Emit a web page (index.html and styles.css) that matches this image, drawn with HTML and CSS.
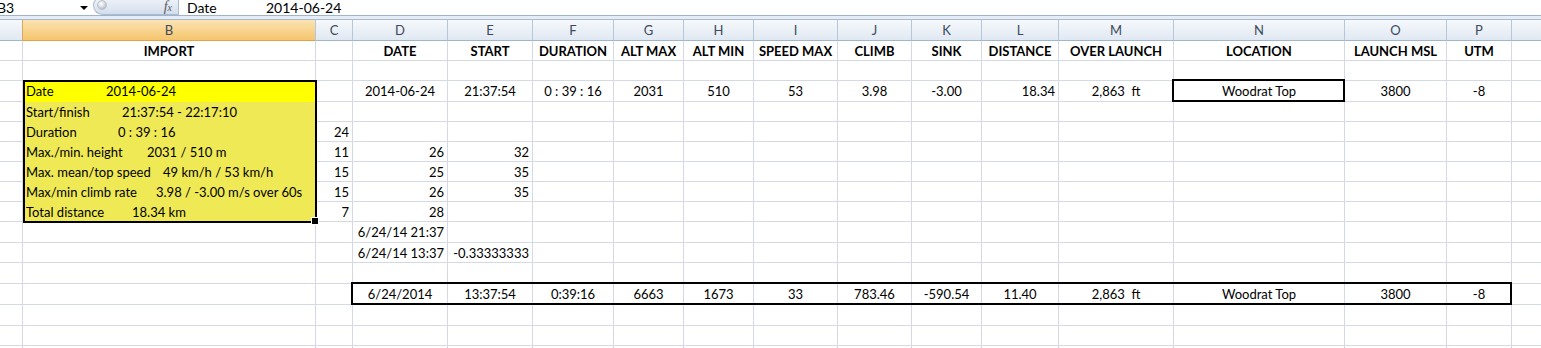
FILE: index.html
```html
<!DOCTYPE html>
<html lang="en">
<head>
<meta charset="utf-8">
<title>Flight log sheet</title>
<link rel="stylesheet" href="styles.css">
</head>
<body>
<div class="fbar">
  <div class="namebox"><span class="nb-text">B3</span><span class="nb-arrow"></span></div>
  <div class="fx-pill"><span class="knob"></span><span class="fx">f<span class="fx-x">x</span></span></div>
  <div class="formula"><span class="f-lbl">Date</span><span>2014-06-24</span></div>
</div>
<div class="strip"></div>
<div class="sheet">
  <div class="row hdr">
    <div class="h"></div><div class="h sel-h">B</div><div class="h">C</div><div class="h">D</div><div class="h">E</div><div class="h">F</div><div class="h">G</div><div class="h">H</div><div class="h">I</div><div class="h">J</div><div class="h">K</div><div class="h">L</div><div class="h">M</div><div class="h">N</div><div class="h">O</div><div class="h">P</div><div class="h"></div>
  </div>
  <div class="row r20 bold">
    <div></div><div class="c">IMPORT</div><div></div><div class="c">DATE</div><div class="c">START</div><div class="c">DURATION</div><div class="c">ALT MAX</div><div class="c">ALT MIN</div><div class="c">SPEED MAX</div><div class="c">CLIMB</div><div class="c">SINK</div><div class="c">DISTANCE</div><div class="c">OVER LAUNCH</div><div class="c">LOCATION</div><div class="c">LAUNCH MSL</div><div class="c">UTM</div><div></div>
  </div>
  <div class="row r20">
    <div></div><div></div><div></div><div></div><div></div><div></div><div></div><div></div><div></div><div></div><div></div><div></div><div></div><div></div><div></div><div></div><div></div>
  </div>
  <div class="row r21">
    <div></div><div class="yb sel sel-top"><span class="lb w1">Date</span>2014-06-24</div><div></div><div class="c">2014-06-24</div><div class="c">21:37:54</div><div class="c">0 : 39 : 16</div><div class="c">2031</div><div class="c">510</div><div class="c">53</div><div class="c">3.98</div><div class="c">-3.00</div><div class="r dist">18.34</div><div class="c">2,863&nbsp; ft</div><div class="c box">Woodrat Top</div><div class="c">3800</div><div class="c">-8</div><div></div>
  </div>
  <div class="row r20">
    <div></div><div class="ys sel"><span class="lb w2">Start/finish</span>21:37:54 - 22:17:10</div><div></div><div></div><div></div><div></div><div></div><div></div><div></div><div></div><div></div><div></div><div></div><div></div><div></div><div></div><div></div>
  </div>
  <div class="row r20">
    <div></div><div class="ys sel"><span class="lb w3">Duration</span>0 : 39 : 16</div><div class="r">24</div><div></div><div></div><div></div><div></div><div></div><div></div><div></div><div></div><div></div><div></div><div></div><div></div><div></div><div></div>
  </div>
  <div class="row r20">
    <div></div><div class="ys sel"><span class="lb w4">Max./min. height</span>2031 / 510 m</div><div class="r">11</div><div class="r">26</div><div class="r">32</div><div></div><div></div><div></div><div></div><div></div><div></div><div></div><div></div><div></div><div></div><div></div><div></div>
  </div>
  <div class="row r20">
    <div></div><div class="ys sel"><span class="lb w5">Max. mean/top speed</span>49 km/h / 53 km/h</div><div class="r">15</div><div class="r">25</div><div class="r">35</div><div></div><div></div><div></div><div></div><div></div><div></div><div></div><div></div><div></div><div></div><div></div><div></div>
  </div>
  <div class="row r20">
    <div></div><div class="ys sel"><span class="lb w6">Max/min climb rate</span>3.98 / -3.00 m/s over 60s</div><div class="r">15</div><div class="r">26</div><div class="r">35</div><div></div><div></div><div></div><div></div><div></div><div></div><div></div><div></div><div></div><div></div><div></div><div></div>
  </div>
  <div class="row r20">
    <div></div><div class="ys sel sel-bot"><span class="lb w7">Total distance</span>18.34 km</div><div class="r">7</div><div class="r">28</div><div></div><div></div><div></div><div></div><div></div><div></div><div></div><div></div><div></div><div></div><div></div><div></div><div></div>
  </div>
  <div class="row r21">
    <div></div><div></div><div></div><div class="r">6/24/14 21:37</div><div></div><div></div><div></div><div></div><div></div><div></div><div></div><div></div><div></div><div></div><div></div><div></div><div></div>
  </div>
  <div class="row r20">
    <div></div><div></div><div></div><div class="r">6/24/14 13:37</div><div class="r frac">-0.33333333</div><div></div><div></div><div></div><div></div><div></div><div></div><div></div><div></div><div></div><div></div><div></div><div></div>
  </div>
  <div class="row r21">
    <div></div><div></div><div></div><div></div><div></div><div></div><div></div><div></div><div></div><div></div><div></div><div></div><div></div><div></div><div></div><div></div><div></div>
  </div>
  <div class="row r21">
    <div></div><div></div><div></div><div class="c fr fr-l">6/24/2014</div><div class="c fr">13:37:54</div><div class="c fr">0:39:16</div><div class="c fr">6663</div><div class="c fr">1673</div><div class="c fr">33</div><div class="c fr">783.46</div><div class="c fr">-590.54</div><div class="c fr">11.40</div><div class="c fr">2,863&nbsp; ft</div><div class="c fr">Woodrat Top</div><div class="c fr">3800</div><div class="c fr fr-r">-8</div><div></div>
  </div>
  <div class="row r21">
    <div></div><div></div><div></div><div></div><div></div><div></div><div></div><div></div><div></div><div></div><div></div><div></div><div></div><div></div><div></div><div></div><div></div>
  </div>
  <div class="row r20">
    <div></div><div></div><div></div><div></div><div></div><div></div><div></div><div></div><div></div><div></div><div></div><div></div><div></div><div></div><div></div><div></div><div></div>
  </div>
  <div class="row r2">
    <div></div><div></div><div></div><div></div><div></div><div></div><div></div><div></div><div></div><div></div><div></div><div></div><div></div><div></div><div></div><div></div><div></div>
  </div>
</div>
</body>
</html>
```
FILE: styles.css
```css
* { box-sizing: border-box; margin: 0; padding: 0; }
html, body { background: #fff; }
body {
  margin: 0;
  width: 1541px;
  height: 348px;
  overflow: hidden;
  font-family: "Lato", "Liberation Sans", sans-serif;
  font-size: 13px;
  color: #000;
}

/* formula bar */
.fbar {
  height: 16px;
  display: flex;
  border-bottom: 1px solid #9fb3cb;
  background: #fff;
  overflow: hidden;
}
.namebox {
  width: 93px;
  display: flex;
  align-items: center;
  overflow: hidden;
}
.nb-text { margin-left: -3px; line-height: 15px; font-size: 14px; }
.nb-arrow {
  margin-left: auto;
  margin-right: 5px;
  width: 0; height: 0;
  border-left: 4px solid transparent;
  border-right: 4px solid transparent;
  border-top: 4px solid #000;
}
.fx-pill {
  width: 85px;
  height: 19px;
  margin-top: -4px;
  border: 1px solid #a9bbd2;
  border-right: 0;
  border-radius: 10px 0 0 10px;
  background: linear-gradient(#f1f5fa, #d3deec);
  display: flex;
  align-items: center;
  justify-content: space-between;
  padding: 0 6px 0 3px;
}
.knob {
  width: 10px; height: 10px;
  margin-top: -2px;
  border-radius: 50%;
  background: radial-gradient(circle at 40% 35%, #ffffff 0, #d9dde3 45%, #9aa3ae 100%);
  border: 1px solid #b8c2cf;
}
.fx {
  font-family: "Liberation Serif", serif;
  font-style: italic;
  font-size: 14px;
  color: #5a5a5a;
  margin-top: 3px;
}
.fx-x { font-size: 10px; }
.formula {
  flex: 1;
  border-left: 1px solid #a9bbd2;
  padding-left: 8px;
  line-height: 15px;
  font-size: 14px;
  display: flex;
}
.f-lbl { display: inline-block; width: 79px; }

.strip {
  height: 3px;
  background: #e6edf6;
}

/* sheet */
.row {
  display: grid;
  grid-template-columns: 22px 293px 37px 95px 85px 81px 70px 70px 84px 74px 70px 77px 115px 171px 102px 65px 1fr;
}
.row > div {
  border-left: 1px solid #d5d9e6;
  border-bottom: 1px solid #d5d9e6;
  white-space: nowrap;
  padding: 1px 3px 0;
}
.row > div:first-child { border-left: 0; }
.r20 { height: 20px; }
.r20 > div { line-height: 18px; }
.r21 { height: 21px; }
.r21 > div { line-height: 19px; }
.r2 { height: 2px; }
.r2 > div { border-bottom: 0; padding: 0; }

.hdr { height: 22px; }
.hdr > .h {
  border-top: 1px solid #a7b9cf;
  border-bottom: 1px solid #9eb6ce;
  border-left: 1px solid #b7c7da;
  background: linear-gradient(#f6f9fc, #e0e8f2);
  color: #3c4a5c;
  font-size: 13px;
  line-height: 19px;
  text-align: center;
}
.hdr > .h:first-child { border-left: 0; }
.hdr > .sel-h {
  background: linear-gradient(#fbe3b4, #f5c56c);
  border-bottom-color: #e3a245;
  border-left-color: #d8a960;
}

.bold > div { font-weight: 700; }
.c { text-align: center; }
.r { text-align: right; }
.dist { padding-right: 14px; }
.frac { padding-right: 6px; }

/* yellow summary block */
.yb { background: #ffff00; }
.ys { background: #efe955; }
.row > .yb, .row > .ys { border-bottom-color: transparent; }
.lb { display: inline-block; }
.w1 { width: 80px; }
.w2 { width: 96px; }
.w3 { width: 92px; }
.w4 { width: 121px; }
.w5 { width: 137px; }
.w6 { width: 130px; }
.w7 { width: 106px; }

.sel { position: relative; }
.sel::after {
  content: "";
  position: absolute;
  top: 0; bottom: -1px;
  left: 0; right: -2px;
  border-left: 2px solid #000;
  border-right: 2px solid #000;
  pointer-events: none;
  z-index: 2;
}
.sel-top::after { top: -1px; border-top: 2px solid #000; }
.sel-bot::after { bottom: -2px; border-bottom: 2px solid #000; }
.sel-bot::before {
  content: "";
  position: absolute;
  right: -4px;
  bottom: -4px;
  width: 6px; height: 6px;
  background: #000;
  border: 1px solid #fff;
  z-index: 3;
}

/* thick framed cells */
.box, .fr { position: relative; }
.box::after {
  content: "";
  position: absolute;
  top: -2px; bottom: -1px;
  left: -2px; right: -1px;
  border: 2px solid #000;
  pointer-events: none;
  z-index: 2;
}
.fr::after {
  content: "";
  position: absolute;
  top: -2px; bottom: -1px;
  left: -1px; right: -1px;
  border-top: 2px solid #000;
  border-bottom: 2px solid #000;
  pointer-events: none;
  z-index: 2;
}
.fr-l::after { left: -2px; border-left: 2px solid #000; }
.fr-r::after { right: -1px; border-right: 2px solid #000; }
```
